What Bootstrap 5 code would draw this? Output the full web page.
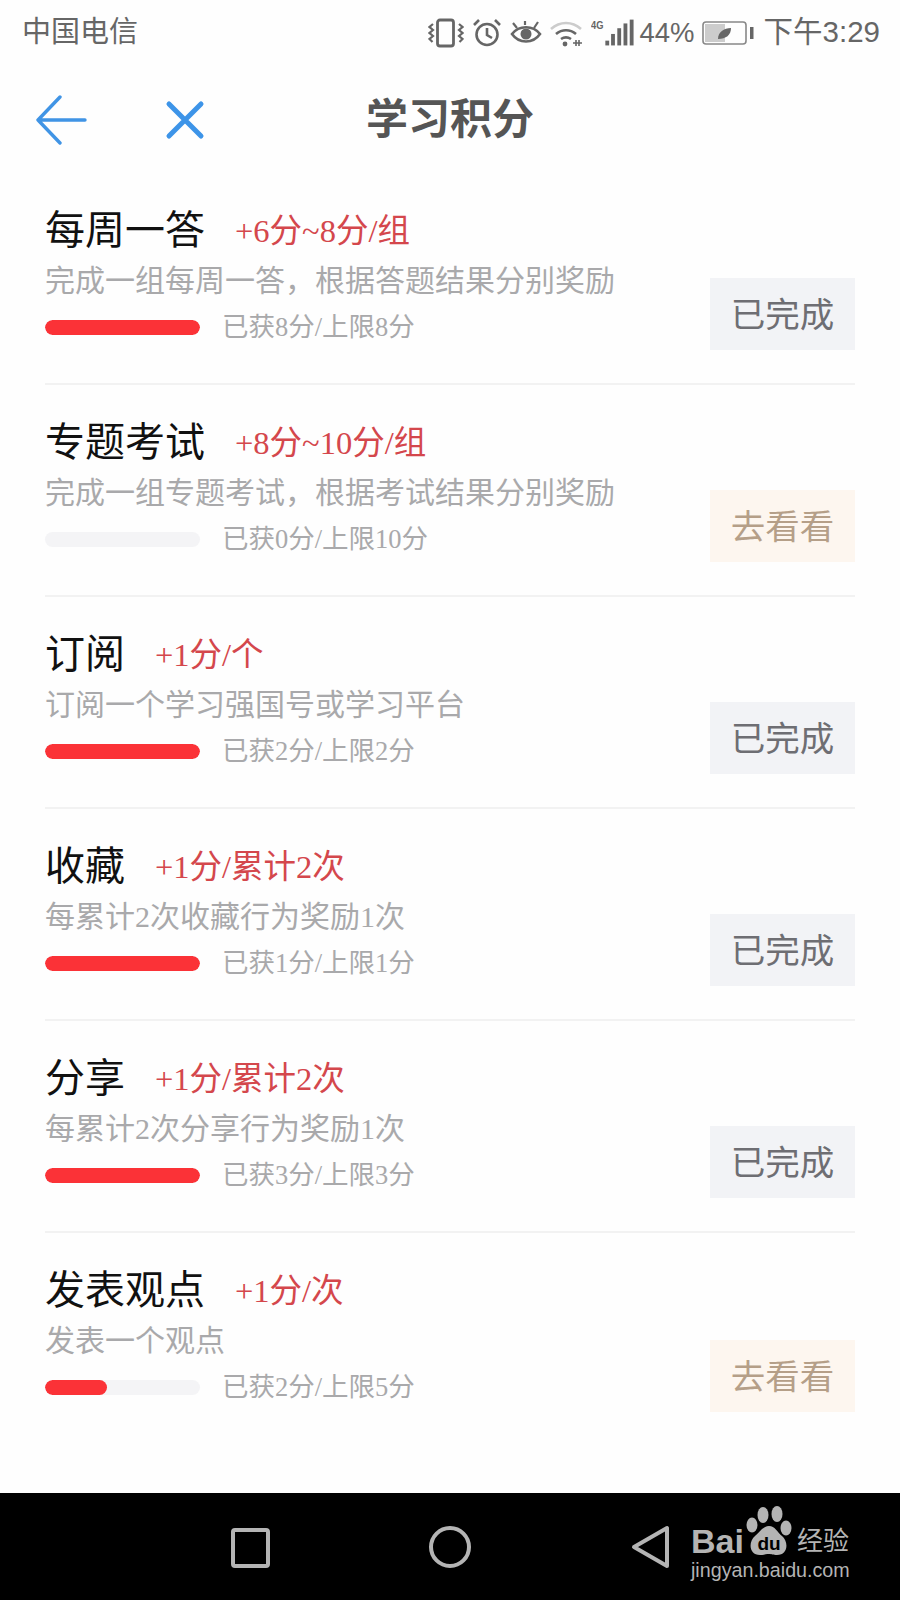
<!DOCTYPE html>
<html lang="zh-CN">
<head>
    <meta charset="UTF-8">
    <meta name="viewport" content="width=device-width, initial-scale=1.0">
    <title>学习积分</title>
    <link href="https://cdn.jsdelivr.net/npm/bootstrap@5.3.0/dist/css/bootstrap.min.css" rel="stylesheet">
    <style>
        html, body { height: 1600px; overflow: hidden; }
        body { background: #fefefe; font-family: "Liberation Sans", "Noto Sans CJK SC", sans-serif; position: relative; }
        .status-line { height: 66px; padding: 0 20px 0 22px; color: #666; font-size: 29px; }
        .status-icons { gap: 8px; }
        .status-pct { font-size: 27.5px; margin-left: -3px; margin-right: -1px; }
        .status-time { font-size: 29.5px; margin-left: 1px; margin-top: -2px; }
        .head-line { height: 107px; display: grid; grid-template-columns: 1fr auto 1fr; align-items: center; padding: 0 36px; }
        .head-close { margin-left: 77px; }
        .head-title { font-size: 42px; font-weight: 700; color: #555; line-height: 1; }
        .task-list { padding: 0 45px; }
        .task-row { height: 212px; padding-top: 33px; border-bottom: 2px solid #f2f2f2; }
        .task-row:last-child { border-bottom: 0; }
        .task-name { font-family: "Liberation Serif", "Noto Sans CJK SC", serif; font-size: 40px; color: #111; line-height: 50px; }
        .task-pts { font-family: "Liberation Serif", "Noto Sans CJK SC", serif; font-size: 32.5px; color: #d4474c; margin-left: 30px; }
        .task-desc { font-family: "Liberation Serif", "Noto Sans CJK SC", serif; font-size: 30px; color: #a9a9ab; line-height: 40px; margin-top: 5px; }
        .task-prog { height: 40px; margin-top: 6px; }
        .task-prog .progress { width: 155px; height: 15px; background: #f4f4f6; border-radius: 8px; }
        .task-prog .progress-bar { background: #fb3237; border-radius: 8px; }
        .task-got { font-family: "Liberation Serif", "Noto Sans CJK SC", serif; font-size: 26.5px; color: #a9a9ab; margin-left: 22px; margin-top: 2px; }
        .task-btn { width: 145px; height: 72px; padding-top: 3px; font-size: 34.5px; line-height: 1; margin-bottom: 33px; }
        .btn-done { background: #f2f3f6; color: #6e6e73; }
        .btn-go { background: #fdf6ef; color: #b59f88; }
        .bottom-nav { position: absolute; left: 0; right: 0; top: 1493px; height: 107px; background: #000; }
        .nav-icons { position: absolute; left: 0; top: 1493px; }
        .mark-box { position: absolute; left: 691px; top: 1505px; width: 170px; height: 92px; color: #b4b4b4; }
        .mark-bai { position: absolute; left: 0; top: 19px; font-size: 34px; font-weight: 700; line-height: 1; }
        .mark-jy { position: absolute; left: 106px; top: 23px; font-size: 26px; line-height: 1; white-space: nowrap; }
        .mark-url { position: absolute; left: 0; top: 52px; font-size: 19.7px; line-height: 26px; white-space: nowrap; }
        .mark-paw { position: absolute; left: 55px; top: -1px; }
    </style>
</head>
<body>
    <div class="status-line d-flex align-items-center justify-content-between">
        <span>中国电信</span>
        <div class="status-icons d-flex align-items-center">
            <!-- vibrate -->
            <svg width="36" height="30" viewBox="0 0 36 30" fill="none" stroke="#666" stroke-width="2.2">
                <rect x="9.5" y="2" width="16" height="26" rx="2.5" stroke-width="2.8"/>
                <path d="M5 6 1.5 9l3.5 3-3.5 3 3.5 3-3.5 3 3 3M31 6l3.5 3-3.5 3 3.5 3-3.5 3 3.5 3-3 3"/>
            </svg>
            <!-- alarm -->
            <svg width="30" height="30" viewBox="0 0 30 30" fill="none" stroke="#666" stroke-width="2.6">
                <circle cx="15" cy="16.5" r="10.5"/>
                <path d="M15 10v7l5 3M2 7l5-5M28 7l-5-5"/>
            </svg>
            <!-- eye -->
            <svg width="32" height="30" viewBox="0 0 32 30" fill="none" stroke="#666" stroke-width="2.6">
                <path d="M2 16c7-9 21-9 28 0-7 10-21 10-28 0z"/>
                <circle cx="16" cy="16" r="5.5" fill="#666" stroke="none"/>
                <path d="M3 5l4 5M28 4l-4 6M15 3v4" stroke-width="2.2"/>
            </svg>
            <!-- wifi -->
            <svg width="33" height="30" viewBox="0 0 33 30" fill="none" stroke="#666" stroke-width="2.6">
                <path d="M1 11c9-8 21-8 30 0" stroke="#ccc"/>
                <path d="M6 16c6-5 14-5 20 0M11 21c3-2 7-2 10 0"/>
                <circle cx="15" cy="26" r="2.4" fill="#666" stroke="none"/>
                <path d="M23 25h9M26 22v6M29 22v6" stroke-width="1.6"/>
            </svg>
            <!-- 4g signal -->
            <svg width="44" height="30" viewBox="0 0 46 30" fill="#666">
                <text x="0" y="11" font-size="11.5" font-weight="700" font-family="Liberation Sans" textLength="13" lengthAdjust="spacingAndGlyphs">4G</text>
                <rect x="15" y="23" width="4" height="5"/><rect x="21" y="16" width="4" height="12"/><rect x="27.5" y="10" width="4" height="18"/><rect x="34" y="5" width="4" height="23"/><rect x="40.5" y="1" width="4" height="27"/>
            </svg>
            <span class="status-pct">44%</span>
            <!-- battery -->
            <svg width="53" height="26" viewBox="0 0 53 26" fill="none">
                <rect x="1" y="2" width="43" height="22" rx="3" stroke="#888" stroke-width="1.6"/>
                <rect x="3" y="4" width="20" height="18" fill="#ccc"/>
                <path d="M16 19c0-7 6-11 13-11 0 7-5 11-13 11z" fill="#666"/>
                <rect x="48" y="7" width="3.5" height="12" fill="#666"/>
            </svg>
            <span class="status-time">下午3:29</span>
        </div>
    </div>

    <div class="head-line">
        <div class="d-flex align-items-center">
            <svg width="52" height="50" viewBox="0 0 52 50" fill="none" stroke="#4094e5" stroke-width="3.4" stroke-linecap="round" stroke-linejoin="round">
                <path d="M24 2 2 25l22 23M2 25h47"/>
            </svg>
            <svg class="head-close" width="40" height="40" viewBox="0 0 40 40" fill="none" stroke="#3d94e8" stroke-width="5" stroke-linecap="round">
                <path d="M4 4l32 32M36 4 4 36"/>
            </svg>
        </div>
        <div class="head-title">学习积分</div>
        <div></div>
    </div>

    <div class="task-list">
        <div class="task-row d-flex justify-content-between">
            <div>
                <div class="d-flex align-items-center"><span class="task-name">每周一答</span><span class="task-pts">+6分~8分/组</span></div>
                <div class="task-desc">完成一组每周一答，根据答题结果分别奖励</div>
                <div class="task-prog d-flex align-items-center">
                    <div class="progress"><div class="progress-bar" style="width:100%"></div></div>
                    <span class="task-got">已获8分/上限8分</span>
                </div>
            </div>
            <div class="task-btn btn-done d-flex align-items-center justify-content-center align-self-end">已完成</div>
        </div>
        <div class="task-row d-flex justify-content-between">
            <div>
                <div class="d-flex align-items-center"><span class="task-name">专题考试</span><span class="task-pts">+8分~10分/组</span></div>
                <div class="task-desc">完成一组专题考试，根据考试结果分别奖励</div>
                <div class="task-prog d-flex align-items-center">
                    <div class="progress"><div class="progress-bar" style="width:0%"></div></div>
                    <span class="task-got">已获0分/上限10分</span>
                </div>
            </div>
            <div class="task-btn btn-go d-flex align-items-center justify-content-center align-self-end">去看看</div>
        </div>
        <div class="task-row d-flex justify-content-between">
            <div>
                <div class="d-flex align-items-center"><span class="task-name">订阅</span><span class="task-pts">+1分/个</span></div>
                <div class="task-desc">订阅一个学习强国号或学习平台</div>
                <div class="task-prog d-flex align-items-center">
                    <div class="progress"><div class="progress-bar" style="width:100%"></div></div>
                    <span class="task-got">已获2分/上限2分</span>
                </div>
            </div>
            <div class="task-btn btn-done d-flex align-items-center justify-content-center align-self-end">已完成</div>
        </div>
        <div class="task-row d-flex justify-content-between">
            <div>
                <div class="d-flex align-items-center"><span class="task-name">收藏</span><span class="task-pts">+1分/累计2次</span></div>
                <div class="task-desc">每累计2次收藏行为奖励1次</div>
                <div class="task-prog d-flex align-items-center">
                    <div class="progress"><div class="progress-bar" style="width:100%"></div></div>
                    <span class="task-got">已获1分/上限1分</span>
                </div>
            </div>
            <div class="task-btn btn-done d-flex align-items-center justify-content-center align-self-end">已完成</div>
        </div>
        <div class="task-row d-flex justify-content-between">
            <div>
                <div class="d-flex align-items-center"><span class="task-name">分享</span><span class="task-pts">+1分/累计2次</span></div>
                <div class="task-desc">每累计2次分享行为奖励1次</div>
                <div class="task-prog d-flex align-items-center">
                    <div class="progress"><div class="progress-bar" style="width:100%"></div></div>
                    <span class="task-got">已获3分/上限3分</span>
                </div>
            </div>
            <div class="task-btn btn-done d-flex align-items-center justify-content-center align-self-end">已完成</div>
        </div>
        <div class="task-row d-flex justify-content-between">
            <div>
                <div class="d-flex align-items-center"><span class="task-name">发表观点</span><span class="task-pts">+1分/次</span></div>
                <div class="task-desc">发表一个观点</div>
                <div class="task-prog d-flex align-items-center">
                    <div class="progress"><div class="progress-bar" style="width:40%"></div></div>
                    <span class="task-got">已获2分/上限5分</span>
                </div>
            </div>
            <div class="task-btn btn-go d-flex align-items-center justify-content-center align-self-end">去看看</div>
        </div>
    </div>

    <div class="bottom-nav"></div>
    <svg class="nav-icons" width="700" height="107" viewBox="0 1493 700 107" fill="none" stroke="#b4b4b4" stroke-width="4" stroke-linejoin="round">
        <rect x="233" y="1530" width="35" height="36" rx="2"/>
        <circle cx="450" cy="1547" r="19"/>
        <path d="M667 1528v38l-33-19z"/>
    </svg>
    <div class="mark-box">
        <span class="mark-bai">Bai</span>
        <svg class="mark-paw" width="48" height="54" viewBox="0 0 48 54" fill="#b4b4b4">
            <ellipse cx="17" cy="11" rx="5.5" ry="8"/>
            <ellipse cx="31" cy="10" rx="5.5" ry="8"/>
            <ellipse cx="6" cy="21" rx="5.5" ry="7.5"/>
            <ellipse cx="40" cy="24" rx="5.5" ry="7.5"/>
            <path d="M23 22c6 0 8 6 13 10 7 6 6 19-5 19-4 0-5-1-8-1s-5 1-9 1c-11 0-12-13-5-19 5-4 8-10 14-10z"/>
            <text x="23" y="46" text-anchor="middle" font-size="19" font-weight="700" font-family="Liberation Sans" fill="#000">du</text>
        </svg>
        <span class="mark-jy">经验</span>
        <span class="mark-url">jingyan.baidu.com</span>
    </div>
    <script src="https://cdn.jsdelivr.net/npm/bootstrap@5.3.0/dist/js/bootstrap.bundle.min.js"></script>
</body>
</html>
